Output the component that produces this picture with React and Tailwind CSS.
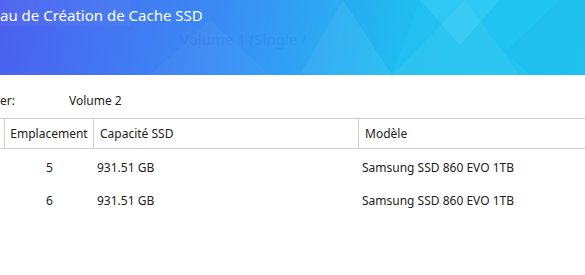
import React from 'react';

const disks = [
  { id: 1, slot: 5, size: '931.51 GB', model: 'Samsung SSD 860 EVO 1TB' },
  { id: 2, slot: 6, size: '931.51 GB', model: 'Samsung SSD 860 EVO 1TB' },
];

// Decorative triangles of the wizard banner
const BannerPattern = () => (
  <svg className="absolute inset-0" width="585" height="75" viewBox="0 0 585 75">
    <polygon points="0,0 130,0 130,26 0,26" fill="#ffffff" opacity="0.04" />
    <polygon points="300,75 343,0 392,75" fill="#ffffff" opacity="0.05" />
    <polygon points="343,0 420,0 392,75" fill="#0a6fd0" opacity="0.04" />
    <polygon points="392,75 465,0 520,75" fill="#ffffff" opacity="0.05" />
    <polygon points="420,0 500,0 460,45" fill="#7ff0ff" opacity="0.15" />
    <polygon points="505,52 560,0 585,0 585,75 530,75" fill="#0a60c0" opacity="0.06" />
    <polygon points="150,75 210,20 270,75" fill="#ffffff" opacity="0.03" />
  </svg>
);

export default function App() {
  return (
    <div className="w-[585px] h-[275px] bg-white overflow-hidden text-[#222]" style={{ fontFamily: '"Noto Sans", "Open Sans", sans-serif' }}>
      {/* Banner */}
      <div className="relative h-[75px] bg-[linear-gradient(100deg,#4b60ef_0%,#3a8cf4_38%,#22bff1_68%,#20c8f0_100%)] overflow-hidden">
        <BannerPattern />
        <div className="relative pt-[5px] text-[15px] leading-[20px] text-white whitespace-nowrap">au de Création de Cache SSD</div>
        <div className="relative pl-[180px] pt-[4px] text-[15px] leading-[20px] text-[#1d3f9c] opacity-[0.08] whitespace-nowrap">Volume 1 (Single /</div>
      </div>

      {/* Target volume */}
      <div className="h-[43px] pt-[17px] flex text-[12px] leading-[18px]">
        <span className="w-[69px]">er:</span>
        <span>Volume 2</span>
      </div>

      {/* SSD table */}
      <div className="text-[12px]">
        <div className="flex h-[31px] border-y border-[#d0d0d0] leading-[29px]">
          <div className="w-[5px] border-r border-[#d0d0d0]" />
          <div className="w-[89px] border-r border-[#d0d0d0] text-center">Emplacement</div>
          <div className="w-[265px] border-r border-[#d0d0d0] pl-[6px]">Capacité SSD</div>
          <div className="flex-1 pl-[6px]">Modèle</div>
        </div>
        <div className="pt-[2px]">
          {disks.map((d) => (
            <div key={d.id} className="flex h-[33px] items-center">
              <div className="w-[5px]" />
              <div className="w-[89px] text-center">{d.slot}</div>
              <div className="w-[265px] pl-[3px]">{d.size}</div>
              <div className="flex-1 pl-[3px]">{d.model}</div>
            </div>
          ))}
        </div>
      </div>
    </div>
  );
}
